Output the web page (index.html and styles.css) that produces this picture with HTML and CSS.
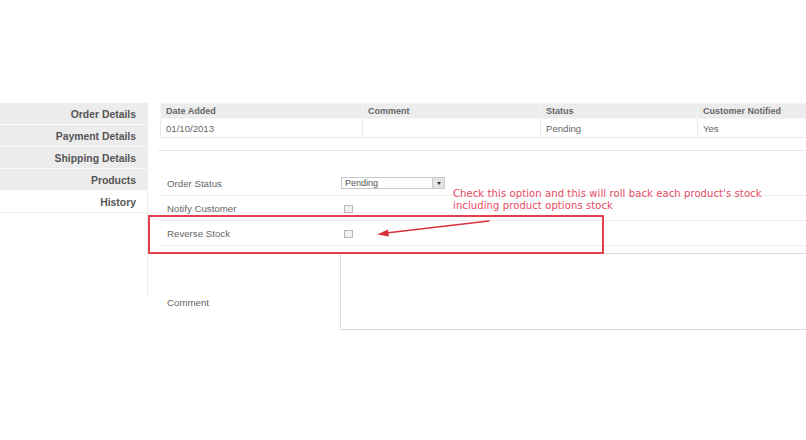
FILE: index.html
```html
<!DOCTYPE html>
<html>
<head>
<meta charset="utf-8">
<link rel="stylesheet" href="styles.css">
</head>
<body>
<div class="page">
  <div class="layout">
    <ul class="sidebar">
      <li class="tab">Order Details</li>
      <li class="tab">Payment Details</li>
      <li class="tab">Shipping Details</li>
      <li class="tab">Products</li>
      <li class="tab active">History</li>
    </ul>
    <div class="main">
      <table class="history">
        <thead>
          <tr><th class="c1">Date Added</th><th class="c2">Comment</th><th class="c3">Status</th><th>Customer Notified</th></tr>
        </thead>
        <tbody>
          <tr><td>01/10/2013</td><td></td><td>Pending</td><td>Yes</td></tr>
        </tbody>
      </table>
      <div class="divider"></div>
      <div class="form">
        <div class="row">
          <div class="label">Order Status</div>
          <div class="field"><div class="select"><span class="select-text">Pending</span><span class="select-btn"><span class="tri"></span></span></div></div>
        </div>
        <div class="row">
          <div class="label">Notify Customer</div>
          <div class="field"><span class="check"></span></div>
        </div>
        <div class="row">
          <div class="label">Reverse Stock</div>
          <div class="field"><span class="check"></span></div>
        </div>
        <div class="row row-comment">
          <div class="label label-comment">Comment</div>
          <div class="field"><div class="textarea"></div></div>
        </div>
      </div>
    </div>
  </div>
  <div class="highlight"></div>
  <svg class="arrow" width="806" height="440" viewBox="0 0 806 440">
    <line x1="489" y1="221" x2="386" y2="233" stroke="#d8323e" stroke-width="1.6" stroke-linecap="round"/>
    <polygon points="377,234.5 388,229.5 389,236.5" fill="#d8323e"/>
  </svg>
  <div class="note">Check this option and this will roll back each product's stock<br>including product options stock</div>
</div>
</body>
</html>
```
FILE: styles.css
```css
html, body {
  margin: 0;
  padding: 0;
  background: #fff;
}
body {
  font-family: "Liberation Sans", Arial, sans-serif;
  color: #555;
}
.page {
  position: relative;
  width: 806px;
  height: 440px;
  overflow: hidden;
  padding-top: 103px;
  box-sizing: border-box;
}
.layout {
  display: flex;
  align-items: flex-start;
}
.sidebar {
  list-style: none;
  margin: 0;
  padding: 0;
  width: 148px;
  flex: none;
  height: 192px;
  border-right: 1px solid #ececec;
  box-sizing: border-box;
}
.tab {
  height: 21px;
  line-height: 24px;
  border-bottom: 1px solid #fafafa;
  background: #ececec;
  text-align: right;
  padding-right: 11px;
  font-size: 10.4px;
  font-weight: bold;
  color: #555;
}
.tab.active {
  background: #fff;
  border-bottom: 1px solid #eee;
}
.main {
  flex: 1;
  min-width: 0;
  margin-left: 12px;
}
.history {
  border-collapse: collapse;
  width: 660px;
  table-layout: fixed;
}
.history th {
  height: 14px;
  background: #ececec;
  text-align: left;
  padding: 0 5px;
  font-size: 9px;
  font-weight: bold;
  color: #666;
  border: 1px solid #f4f4f4;
}
.history .c1 { width: 191px; }
.history .c2 { width: 167px; }
.history .c3 { width: 146px; }
.history td {
  height: 18px;
  padding: 0 5px;
  font-size: 9.6px;
  color: #666;
  border: 1px solid #e8e8e8;
}
.divider {
  margin-top: 12px;
  margin-left: -2px;
  border-top: 1px solid #e6e6e6;
}
.form {
  margin-top: 20px;
}
.row {
  display: grid;
  grid-template-columns: 181px 1fr;
  height: 24px;
  border-bottom: 1px solid #ededed;
  align-items: center;
}
.label {
  padding-left: 7px;
  font-size: 9.7px;
  color: #666;
}
.field {
  display: flex;
  align-items: center;
}
.select {
  width: 104px;
  height: 12px;
  border: 1px solid #c8c8c8;
  box-sizing: border-box;
  display: flex;
  align-items: center;
  justify-content: space-between;
  background: #fff;
}
.select-text {
  font-size: 9px;
  padding-left: 3px;
  color: #555;
}
.select-btn {
  width: 11px;
  height: 10px;
  background: #e4e4e4;
  border-left: 1px solid #c8c8c8;
  display: flex;
  align-items: center;
  justify-content: center;
}
.tri {
  width: 0;
  height: 0;
  border-left: 2.5px solid transparent;
  border-right: 2.5px solid transparent;
  border-top: 3px solid #333;
}
.check {
  display: block;
  width: 9px;
  height: 8px;
  margin-left: 3px;
  margin-top: 1px;
  border: 1px solid #b8b8b8;
  background: #f2f2f2;
  box-sizing: border-box;
}
.row-comment {
  height: auto;
  border-bottom: none;
  align-items: end;
  padding-top: 7px;
}
.label-comment {
  padding-bottom: 22px;
}
.textarea {
  width: 480px;
  height: 77px;
  margin-left: -1px;
  border: 1px solid #dcdcdc;
  box-sizing: border-box;
  background: #fff;
}
.highlight {
  position: absolute;
  left: 148px;
  top: 215px;
  width: 456px;
  height: 39px;
  border: 2px solid #e2404a;
  box-sizing: border-box;
}
.arrow {
  position: absolute;
  left: 0;
  top: 0;
}
.note {
  position: absolute;
  left: 453px;
  top: 188px;
  font-size: 10px;
  line-height: 12px;
  color: #e64b63;
  font-family: "DejaVu Sans", sans-serif;
  letter-spacing: 0.1px;
  white-space: nowrap;
}
```
